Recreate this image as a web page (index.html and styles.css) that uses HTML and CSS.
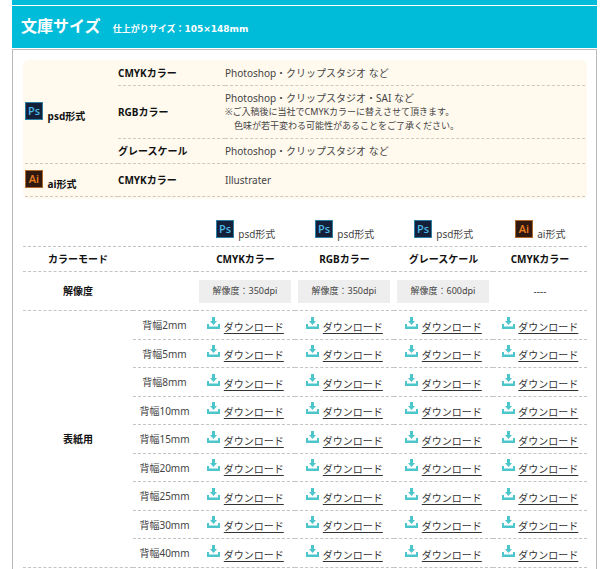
FILE: index.html
```html
<!DOCTYPE html>
<html lang="ja">
<head>
  <meta charset="UTF-8">
  <meta name="viewport" content="width=device-width, initial-scale=1.0">
  <title>文庫サイズ テンプレート</title>
  <link rel="stylesheet" href="styles.css">
</head>
<body>
  <svg class="sprite" aria-hidden="true">
    <symbol id="icon-ps" viewBox="0 0 18 18">
      <rect x="0.5" y="0.5" width="17" height="17" fill="#14203a" stroke="#2a7fa5"/>
      <text x="9" y="13" text-anchor="middle" class="icon-text" fill="#4db9e6">Ps</text>
    </symbol>
    <symbol id="icon-ai" viewBox="0 0 18 18">
      <rect x="0.5" y="0.5" width="17" height="17" fill="#32190f" stroke="#b06a2c"/>
      <text x="9" y="13" text-anchor="middle" class="icon-text" fill="#ea8127">Ai</text>
    </symbol>
    <symbol id="icon-download" viewBox="0 0 13 12">
      <path d="M5 0h3v4h2L6.5 8 3 4h2z" fill="#4cc5cb"/>
      <path d="M0 7h2v2.5h9V7h2v5H0z" fill="#4cc5cb"/>
    </symbol>
  </svg>

  <div class="container">
    <div class="bar"></div>
    <h2 class="title">文庫サイズ <small>仕上がりサイズ：105×148mm</small></h2>

    <div class="content">
      <div class="format-box">
        <table class="format-table">
          <tr>
            <th rowspan="3" class="format"><svg class="icon-app"><use href="#icon-ps"/></svg> psd形式</th>
            <th class="mode">CMYKカラー</th>
            <td>Photoshop・クリップスタジオ など</td>
          </tr>
          <tr class="row-note">
            <th class="mode">RGBカラー</th>
            <td>
              Photoshop・クリップスタジオ・SAI など
              <p class="note">※ご入稿後に当社でCMYKカラーに替えさせて頂きます。<br>　色味が若干変わる可能性があることをご了承ください。</p>
            </td>
          </tr>
          <tr>
            <th class="mode">グレースケール</th>
            <td>Photoshop・クリップスタジオ など</td>
          </tr>
          <tr class="row-ai">
            <th class="format"><svg class="icon-app"><use href="#icon-ai"/></svg> ai形式</th>
            <th class="mode">CMYKカラー</th>
            <td>Illustrater</td>
          </tr>
        </table>
      </div>

      <table class="download-table">
        <colgroup>
          <col class="col-head">
          <col class="col-spine">
          <col class="col-file">
          <col class="col-file">
          <col class="col-file">
          <col>
        </colgroup>
        <tbody>
          <tr class="row-format">
            <td colspan="2"></td>
            <td><svg class="icon-app"><use href="#icon-ps"/></svg> psd形式</td>
            <td><svg class="icon-app"><use href="#icon-ps"/></svg> psd形式</td>
            <td><svg class="icon-app"><use href="#icon-ps"/></svg> psd形式</td>
            <td><svg class="icon-app"><use href="#icon-ai"/></svg> ai形式</td>
          </tr>
          <tr class="row-mode">
            <th>カラーモード</th>
            <td></td>
            <th>CMYKカラー</th>
            <th>RGBカラー</th>
            <th>グレースケール</th>
            <th>CMYKカラー</th>
          </tr>
          <tr class="row-dpi">
            <th>解像度</th>
            <td></td>
            <td><span class="dpi">解像度：350dpi</span></td>
            <td><span class="dpi">解像度：350dpi</span></td>
            <td><span class="dpi">解像度：600dpi</span></td>
            <td>----</td>
          </tr>
        </tbody>
        <tbody class="files">
          <tr>
            <th rowspan="9">表紙用</th>
            <td>背幅2mm</td>
            <td class="dl"><svg class="icon-dl"><use href="#icon-download"/></svg> <a href="#">ダウンロード</a></td>
            <td class="dl"><svg class="icon-dl"><use href="#icon-download"/></svg> <a href="#">ダウンロード</a></td>
            <td class="dl"><svg class="icon-dl"><use href="#icon-download"/></svg> <a href="#">ダウンロード</a></td>
            <td class="dl"><svg class="icon-dl"><use href="#icon-download"/></svg> <a href="#">ダウンロード</a></td>
          </tr>
          <tr>
            <td>背幅5mm</td>
            <td class="dl"><svg class="icon-dl"><use href="#icon-download"/></svg> <a href="#">ダウンロード</a></td>
            <td class="dl"><svg class="icon-dl"><use href="#icon-download"/></svg> <a href="#">ダウンロード</a></td>
            <td class="dl"><svg class="icon-dl"><use href="#icon-download"/></svg> <a href="#">ダウンロード</a></td>
            <td class="dl"><svg class="icon-dl"><use href="#icon-download"/></svg> <a href="#">ダウンロード</a></td>
          </tr>
          <tr>
            <td>背幅8mm</td>
            <td class="dl"><svg class="icon-dl"><use href="#icon-download"/></svg> <a href="#">ダウンロード</a></td>
            <td class="dl"><svg class="icon-dl"><use href="#icon-download"/></svg> <a href="#">ダウンロード</a></td>
            <td class="dl"><svg class="icon-dl"><use href="#icon-download"/></svg> <a href="#">ダウンロード</a></td>
            <td class="dl"><svg class="icon-dl"><use href="#icon-download"/></svg> <a href="#">ダウンロード</a></td>
          </tr>
          <tr>
            <td>背幅10mm</td>
            <td class="dl"><svg class="icon-dl"><use href="#icon-download"/></svg> <a href="#">ダウンロード</a></td>
            <td class="dl"><svg class="icon-dl"><use href="#icon-download"/></svg> <a href="#">ダウンロード</a></td>
            <td class="dl"><svg class="icon-dl"><use href="#icon-download"/></svg> <a href="#">ダウンロード</a></td>
            <td class="dl"><svg class="icon-dl"><use href="#icon-download"/></svg> <a href="#">ダウンロード</a></td>
          </tr>
          <tr>
            <td>背幅15mm</td>
            <td class="dl"><svg class="icon-dl"><use href="#icon-download"/></svg> <a href="#">ダウンロード</a></td>
            <td class="dl"><svg class="icon-dl"><use href="#icon-download"/></svg> <a href="#">ダウンロード</a></td>
            <td class="dl"><svg class="icon-dl"><use href="#icon-download"/></svg> <a href="#">ダウンロード</a></td>
            <td class="dl"><svg class="icon-dl"><use href="#icon-download"/></svg> <a href="#">ダウンロード</a></td>
          </tr>
          <tr>
            <td>背幅20mm</td>
            <td class="dl"><svg class="icon-dl"><use href="#icon-download"/></svg> <a href="#">ダウンロード</a></td>
            <td class="dl"><svg class="icon-dl"><use href="#icon-download"/></svg> <a href="#">ダウンロード</a></td>
            <td class="dl"><svg class="icon-dl"><use href="#icon-download"/></svg> <a href="#">ダウンロード</a></td>
            <td class="dl"><svg class="icon-dl"><use href="#icon-download"/></svg> <a href="#">ダウンロード</a></td>
          </tr>
          <tr>
            <td>背幅25mm</td>
            <td class="dl"><svg class="icon-dl"><use href="#icon-download"/></svg> <a href="#">ダウンロード</a></td>
            <td class="dl"><svg class="icon-dl"><use href="#icon-download"/></svg> <a href="#">ダウンロード</a></td>
            <td class="dl"><svg class="icon-dl"><use href="#icon-download"/></svg> <a href="#">ダウンロード</a></td>
            <td class="dl"><svg class="icon-dl"><use href="#icon-download"/></svg> <a href="#">ダウンロード</a></td>
          </tr>
          <tr>
            <td>背幅30mm</td>
            <td class="dl"><svg class="icon-dl"><use href="#icon-download"/></svg> <a href="#">ダウンロード</a></td>
            <td class="dl"><svg class="icon-dl"><use href="#icon-download"/></svg> <a href="#">ダウンロード</a></td>
            <td class="dl"><svg class="icon-dl"><use href="#icon-download"/></svg> <a href="#">ダウンロード</a></td>
            <td class="dl"><svg class="icon-dl"><use href="#icon-download"/></svg> <a href="#">ダウンロード</a></td>
          </tr>
          <tr>
            <td>背幅40mm</td>
            <td class="dl"><svg class="icon-dl"><use href="#icon-download"/></svg> <a href="#">ダウンロード</a></td>
            <td class="dl"><svg class="icon-dl"><use href="#icon-download"/></svg> <a href="#">ダウンロード</a></td>
            <td class="dl"><svg class="icon-dl"><use href="#icon-download"/></svg> <a href="#">ダウンロード</a></td>
            <td class="dl"><svg class="icon-dl"><use href="#icon-download"/></svg> <a href="#">ダウンロード</a></td>
          </tr>
        </tbody>
      </table>
    </div>
  </div>
</body>
</html>
```
FILE: styles.css
```css
* {
  box-sizing: border-box;
}

body {
  margin: 0;
  background: #fff;
  color: #444;
  font-family: "Noto Sans", "Noto Sans CJK JP", sans-serif;
  font-size: 10px;
  line-height: 14px;
}

.sprite {
  display: none;
}

.container {
  margin: 0 8px 0 12px;
}

.bar {
  height: 5px;
  margin-bottom: 1px;
  background: #00bcd9;
}

.title {
  margin: 0 0 1px;
  padding: 8px 9px 10px;
  background: #00bcd9;
  color: #fff;
  font-size: 16px;
  line-height: 24px;
}

.title small {
  margin-left: 8px;
  font-family: "DejaVu Sans", "Noto Sans CJK JP", sans-serif;
  font-size: 9px;
  line-height: 12px;
}

.content {
  border: 1px solid #bbb;
  border-bottom: none;
  padding: 10px 9px 1px 10px;
}

table {
  width: 100%;
  border-collapse: separate;
  border-spacing: 0;
  table-layout: fixed;
}

th,
td {
  padding: 0;
  border-bottom: 1px dashed #c4c4c4;
}

th {
  color: #111;
}

/* 対応形式 */
.format-box {
  padding: 1px 2px 2px;
  border-radius: 6px;
  background: #fff9ee;
}

.format-table th,
.format-table td {
  height: 25px;
  text-align: left;
  border-color: #d0c8bc;
}

.format-table th.format {
  width: 93px;
}

.format-table th.mode {
  width: 107px;
}

.format-table .row-note td {
  height: 53px;
}

.format-table .row-ai td {
  height: 33px;
}

.note {
  margin: 0;
  font-size: 9px;
}

.icon-app {
  width: 18px;
  height: 18px;
  margin-right: 2px;
  vertical-align: baseline;
}

.icon-text {
  font: 600 11px "Open Sans", sans-serif;
}

/* ダウンロード一覧 */
.download-table th,
.download-table td {
  text-align: center;
}

.col-head {
  width: 110px;
}

.col-spine {
  width: 63px;
}

.col-file {
  width: 99px;
}

.row-format td {
  height: 48px;
  padding-bottom: 5px;
  vertical-align: bottom;
}

.row-mode td {
  height: 25px;
}

.row-dpi td {
  height: 39px;
}

.dpi {
  display: block;
  margin: 0 4px 0 3px;
  padding: 4px 0 5px;
  background: #eee;
  font-size: 9px;
}

.files tr:nth-child(odd) td {
  height: 29px;
}

.files tr:nth-child(even) td {
  height: 28px;
}

.icon-dl {
  width: 13px;
  height: 12px;
  margin-right: 1px;
  margin-bottom: 2px;
  vertical-align: baseline;
}

.files a {
  color: #333;
  text-underline-offset: 2px;
}
```
